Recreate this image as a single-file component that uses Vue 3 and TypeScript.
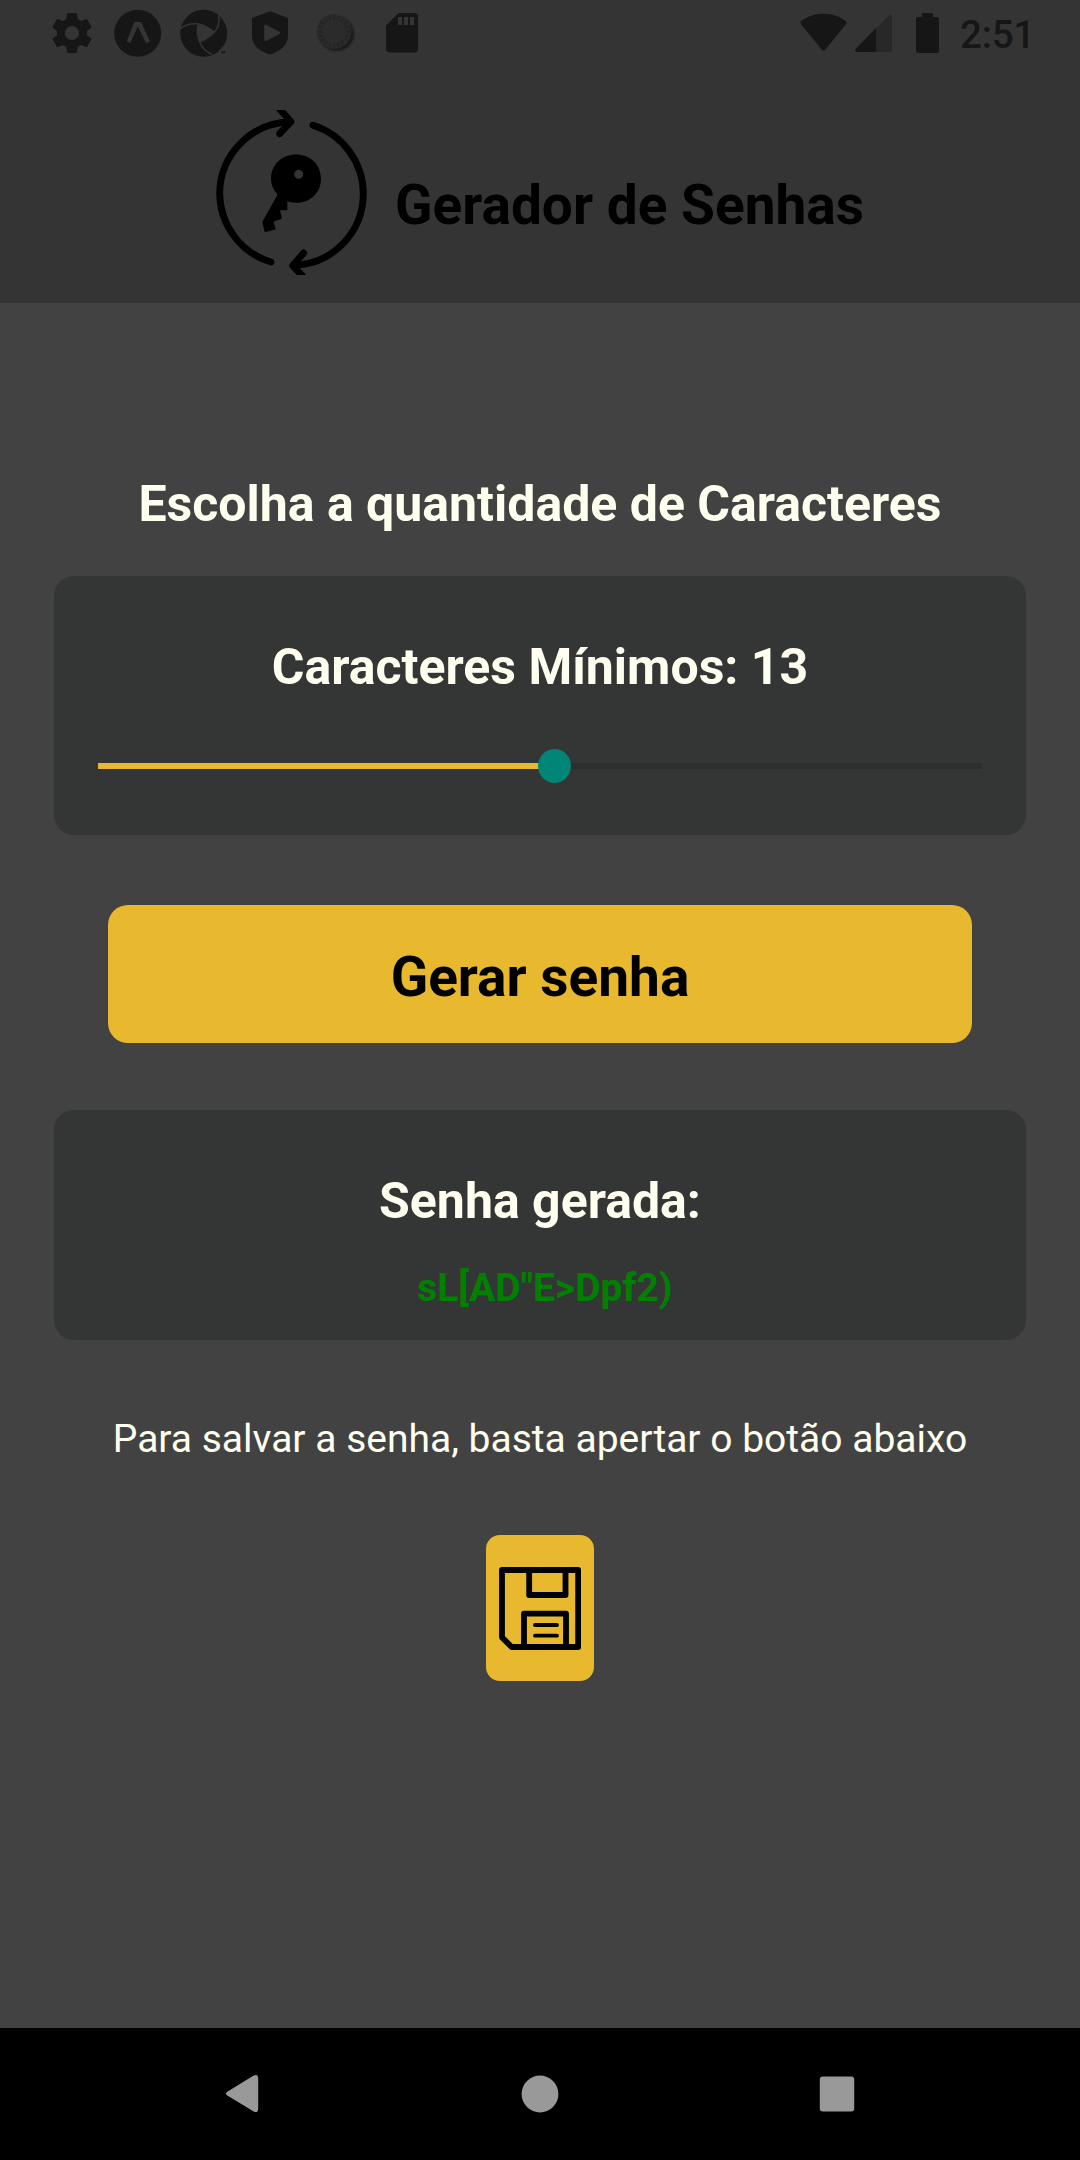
<script setup lang="ts">
import { computed, ref } from 'vue'

const size = ref(13)
const password = ref('sL[AD"E>Dpf2)')
const trackWidth = 884
const thumbCenter = 456
const fillPercent = computed(() => `${(thumbCenter / trackWidth) * 100}%`)
const rays = Array.from({ length: 20 }, (_, i) => i * 18)
</script>

<template>
  <div class="screen">
    <header class="header">
      <div class="status">
        <div class="status-left">
          <svg class="ic gear" viewBox="0 0 24 24"><path d="M19.43 12.98c.04-.32.07-.64.07-.98s-.03-.66-.07-.98l2.11-1.65c.19-.15.24-.42.12-.64l-2-3.46c-.12-.22-.39-.3-.61-.22l-2.49 1c-.52-.4-1.08-.73-1.69-.98l-.38-2.65C14.46 2.18 14.25 2 14 2h-4c-.25 0-.46.18-.49.42l-.38 2.65c-.61.25-1.17.59-1.69.98l-2.49-1c-.23-.09-.49 0-.61.22l-2 3.46c-.13.22-.07.49.12.64l2.11 1.65c-.04.32-.07.65-.07.98s.03.66.07.98l-2.11 1.65c-.19.15-.24.42-.12.64l2 3.46c.12.22.39.3.61.22l2.49-1c.52.4 1.08.73 1.69.98l.38 2.65c.03.24.24.42.49.42h4c.25 0 .46-.18.49-.42l.38-2.65c.61-.25 1.17-.59 1.69-.98l2.49 1c.23.09.49 0 .61-.22l2-3.46c.12-.22.07-.49-.12-.64l-2.11-1.65zM12 15.5c-1.93 0-3.5-1.57-3.5-3.5s1.57-3.5 3.5-3.5 3.5 1.57 3.5 3.5-1.57 3.5-3.5 3.5z" /></svg>
          <svg class="ic" viewBox="0 0 48 48">
            <circle cx="23.700" cy="24.300" r="23.500" />
            <path fill="#343434" d="M20.300 12.900h6.800L35.900 32.300l-3.600 2L23.700 17.500 16.300 34.300l-3.600-2z" />
          </svg>
          <svg class="ic" viewBox="0 0 48 48">
            <circle cx="23.700" cy="24.300" r="23.500" />
            <path class="blade" d="M0 19.800Q8 13.600 18.300 15Q27 16.500 34.300 23.300" />
            <path class="blade" d="M38.700 4Q40.500 17 34.300 23.300Q28 29.500 20 32.700" />
            <path class="blade" d="M32 45.500Q23 41.500 19.600 32.700Q15.800 24 18.300 15" />
            <path fill="#343434" d="M18.300 15Q27 16.500 34.300 23.300Q28 29.500 19.800 32.700Q15.800 24 18.300 15z" />
            <path fill="#343434" d="M38.500 42l9.500-9v9z" />
            <path d="M41 42.300h1.800v2H41zM43.300 42.300h1.800v2h-1.800z" />
          </svg>
          <svg class="ic" viewBox="0 0 48 48">
            <path d="M24 2.200L42 9v18c0 9-8 15.500-18 18.500C14 42.500 6 36 6 27V9z" />
            <path fill="#343434" d="M18.200 17c0-1.200 1-1.700 2-1.200l13.200 7c1 .6 1 1.600 0 2.200l-13.200 7c-1 .5-2 0-2-1.200z" />
          </svg>
          <svg class="ic" viewBox="0 0 48 48">
            <defs>
              <filter id="soft" x="-20%" y="-20%" width="140%" height="140%"><feGaussianBlur stdDeviation="1.200" /></filter>
            </defs>
            <circle cx="24.700" cy="24.900" r="17" filter="url(#soft)" />
            <circle cx="22" cy="22.500" r="17.600" fill="#2b2b2b" />
            <path v-for="r in rays" :key="r" class="ray" d="M22 6v4.500" :transform="`rotate(${r} 22 22.500)`" />
          </svg>
          <svg class="ic" viewBox="0 0 48 48">
            <path fill-rule="evenodd" d="M20.500 4H36a4 4 0 0 1 4 4v31.500a4 4 0 0 1-4 4H12a4 4 0 0 1-4-4V16.500zM20 8v8h4V8zm6 0v8h4V8zm6 0v8h4V8z" />
          </svg>
        </div>
        <div class="status-right">
          <svg class="wifi" viewBox="0 0 47 38"><path d="M1 8.200C13-1.800 34-1.800 46 8.200q1.300 1.200.3 2.600L25 37q-1.500 1.500-3 0L.7 10.800Q-.3 9.400 1 8.200z" /></svg>
          <svg class="cell" viewBox="0 0 37 38">
            <path fill="#282828" d="M21 14.500L34.500 1q2.500-1.500 2.500 1V36q0 2-2 2H21z" />
            <path d="M21 14v24H1.500Q-.7 37.500.6 35z" />
          </svg>
          <svg class="battery" viewBox="0 0 23 40"><path d="M6 0h11v4h4q2 0 2 2v32q0 2-2 2H2q-2 0-2-2V6q0-2 2-2h4z" /></svg>
          <span class="clock">2:51</span>
        </div>
      </div>
      <div class="brand">
        <svg class="logo" viewBox="45 45 460 495">
          <g fill="none" stroke="#000" stroke-width="20.500" stroke-linecap="round" stroke-linejoin="round">
            <path d="M213 501A217 217 0 0 1 59 296A216 216 0 0 1 270 81" />
            <path d="M239 116L273 80L232 34" />
            <path d="M339 91A215.500 215.500 0 0 1 490 297A215.500 215.500 0 0 1 280 511" />
            <path d="M311 474L278 512L318 554" />
          </g>
          <path fill-rule="evenodd" d="M288 178.500c43 0 75 31 75 73s-32 72-73 72q-14 0-28-5v27h-22l6 26-25 8 6 24-33 8-7-31 46-82q-20-20-20-47c0-42 33-73 75-73zM296 224.500a13.500 13.500 0 1 0 .1 0z" />
        </svg>
        <h1 class="title">Gerador de Senhas</h1>
      </div>
    </header>

    <main class="content">
      <h2 class="heading">Escolha a quantidade de Caracteres</h2>
      <section class="card size-card">
        <h2 class="label">Caracteres Mínimos: {{ size }}</h2>
        <div class="slider">
          <div class="fill" :style="{ width: fillPercent }"><span class="thumb"></span></div>
        </div>
      </section>
      <button class="generate" type="button">Gerar senha</button>
      <section class="card result-card">
        <h2 class="label">Senha gerada:</h2>
        <p class="password">&nbsp;{{ password }}</p>
      </section>
      <p class="hint">Para salvar a senha, basta apertar o botão abaixo</p>
      <button class="save" type="button" aria-label="Salvar senha">
        <svg viewBox="87 141 246 249">
          <g fill="none" stroke="#000" stroke-width="17.500" stroke-linejoin="round" stroke-linecap="round">
            <path d="M96 150H324.500V381H125L96 352z" />
            <path d="M177.500 150V225H286.500V150" />
            <path d="M162 381V281H288V381" />
            <path stroke-width="11.500" d="M195 315H261M195 347H261" />
          </g>
        </svg>
      </button>
    </main>

    <nav class="nav">
      <svg viewBox="0 0 60 60"><path d="M13.300 27.800L39.300 11.800Q43.700 9.200 44.200 14V45Q43.700 49.800 39.300 47.200L13.300 31.600Q10.600 29.700 13.300 27.800z" /></svg>
      <svg viewBox="0 0 60 60"><circle cx="30" cy="30" r="18.400" /></svg>
      <svg viewBox="0 0 60 60"><rect x="13.800" y="12.600" width="34.400" height="34.800" rx="3" /></svg>
    </nav>
  </div>
</template>

<style>
body {
  margin: 0;
  background: #424242;
}
</style>

<style scoped>
.screen {
  display: flex;
  flex-direction: column;
  width: 1080px;
  height: 2160px;
  overflow: hidden;
  background: #424242;
  color: #fffff0;
  font-family: Roboto, sans-serif;
}
h1, h2, p {
  margin: 0;
}
svg {
  display: block;
}
.header {
  height: 303px;
  background: #343434;
}
.status {
  display: flex;
  justify-content: space-between;
  height: 66px;
  padding: 0 50px 0 48px;
  fill: #161616;
}
.status-left {
  display: flex;
  gap: 18px;
  padding-top: 9px;
}
.ic {
  width: 48px;
  height: 48px;
}
.blade {
  fill: none;
  stroke: #343434;
  stroke-width: 1.6;
}
.ray {
  stroke: #252525;
  stroke-width: 2.4;
}
.status-right {
  display: flex;
  align-items: flex-start;
  padding-top: 13px;
}
.wifi {
  width: 47px;
  height: 38px;
  margin-right: 8px;
}
.cell {
  width: 37px;
  height: 38px;
  margin: 1px 24px 0 0;
}
.battery {
  width: 23px;
  height: 40px;
}
.clock {
  width: 70px;
  margin: -1px 0 0 21px;
  color: #161616;
  font-size: 38.5px;
  font-weight: 500;
  letter-spacing: -0.2px;
  line-height: 46px;
}
.brand {
  display: flex;
  justify-content: center;
  padding: 44px 1px 0 0;
}
.logo {
  width: 153.3px;
  height: 165px;
}
.title {
  margin: 63px 0 0 26.7px;
  color: #000;
  font-size: 55px;
  font-weight: 700;
  line-height: 65px;
}
.content {
  display: flex;
  flex: 1;
  flex-direction: column;
  align-items: center;
}
.heading,
.label {
  font-size: 50px;
  font-weight: 700;
  line-height: 58px;
}
.heading {
  margin-top: 172px;
}
.card {
  display: flex;
  box-sizing: border-box;
  width: 972px;
  flex-direction: column;
  align-items: center;
  border-radius: 20px;
  background: #343635;
}
.size-card {
  height: 259px;
  margin-top: 43px;
  padding: 62px 44px 0;
}
.slider {
  width: 884px;
  height: 6px;
  margin-top: 67px;
  background: #2d2e2d;
}
.fill {
  position: relative;
  height: 100%;
  background: #e8b92e;
}
.thumb {
  position: absolute;
  top: -14px;
  right: -16.5px;
  width: 33px;
  height: 34px;
  border-radius: 50%;
  background: #008577;
}
.generate,
.save {
  display: flex;
  align-items: center;
  justify-content: center;
  padding: 0;
  border: 0;
  background: #e8b92e;
  color: #000;
}
.generate {
  width: 864px;
  height: 138px;
  margin-top: 70px;
  padding-top: 7px;
  border-radius: 20px;
  font: 700 55px/65px Roboto, sans-serif;
}
.result-card {
  height: 230px;
  margin-top: 67px;
  padding-top: 62px;
}
.password {
  margin-top: 35px;
  color: #008000;
  font-size: 39px;
  font-weight: 700;
  line-height: 46px;
}
.hint {
  margin-top: 76px;
  font-size: 39px;
  line-height: 46px;
}
.save {
  width: 108px;
  height: 146px;
  margin-top: 73px;
  border-radius: 14px;
}
.save svg {
  width: 82px;
  height: 83px;
}
.nav {
  display: flex;
  box-sizing: border-box;
  height: 132px;
  align-items: center;
  justify-content: space-between;
  padding: 0 214px;
  background: #000;
  fill: #999;
}
.nav svg {
  width: 60px;
  height: 60px;
}
</style>
